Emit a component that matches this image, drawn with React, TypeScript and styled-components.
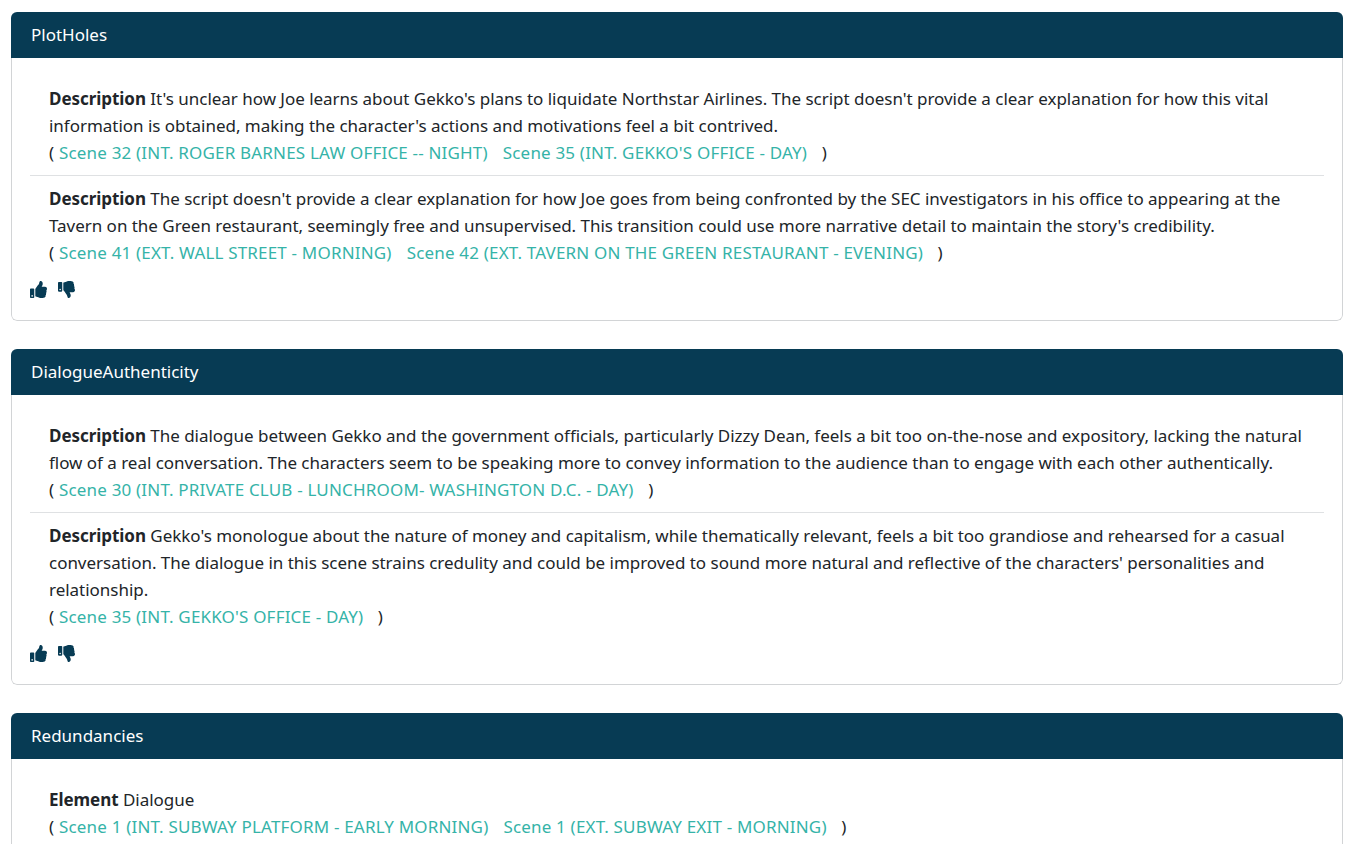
import React from 'react';
import styled, { createGlobalStyle } from 'styled-components';
import { FaThumbsUp, FaThumbsDown } from 'react-icons/fa';

const GlobalStyle = createGlobalStyle`
  html, body {
    margin: 0;
    padding: 0;
    background: #fff;
    height: 844px;
    overflow: hidden;
  }
  body {
    font-family: "Noto Sans", "Open Sans", sans-serif;
    font-size: 17px;
    color: #212529;
  }
`;

const Page = styled.div`
  display: flex;
  flex-direction: column;
  gap: 28px;
  padding: 12px 16px 0 11px;
`;

const Card = styled.section`
  border-radius: 6px;
  overflow: hidden;
  background: #fff;
`;

const CardHeader = styled.header`
  background: #073b54;
  color: #fff;
  height: 46px;
  line-height: 45px;
  padding: 0 20px;
  font-size: 17px;
`;

const CardBody = styled.div`
  border: 1px solid #d2d4d6;
  border-top: none;
  border-radius: 0 0 6px 6px;
  padding: 18px 18px 18px;
`;

const Item = styled.div<{ $divided?: boolean }>`
  padding: 9px 0 9px 19px;
  line-height: 27px;
  letter-spacing: -0.026px;
  border-top: ${props => (props.$divided ? '1px solid #dfe1e3' : 'none')};
`;

const Label = styled.strong`
  font-weight: 700;
  letter-spacing: -0.05px;
`;

const SceneLink = styled.a`
  color: #35b3a8;
  text-decoration: none;
  letter-spacing: 0.18px;
  margin: 0 14.5px 0 0.5px;
`;

const Votes = styled.div`
  display: flex;
  gap: 11px;
  color: #073b54;
  font-size: 17px;
  height: 25px;
  padding-top: 2px;
  align-items: center;
`;

type Entry = { label: string; text?: string; scenes: string[] };

const sections: { title: string; entries: Entry[]; votes: boolean }[] = [
  {
    title: 'PlotHoles',
    votes: true,
    entries: [
      {
        label: 'Description',
        text: "It's unclear how Joe learns about Gekko's plans to liquidate Northstar Airlines. The script doesn't provide a clear explanation for how this vital information is obtained, making the character's actions and motivations feel a bit contrived.",
        scenes: ['Scene 32 (INT. ROGER BARNES LAW OFFICE -- NIGHT)', "Scene 35 (INT. GEKKO'S OFFICE - DAY)"],
      },
      {
        label: 'Description',
        text: "The script doesn't provide a clear explanation for how Joe goes from being confronted by the SEC investigators in his office to appearing at the Tavern on the Green restaurant, seemingly free and unsupervised. This transition could use more narrative detail to maintain the story's credibility.",
        scenes: ['Scene 41 (EXT. WALL STREET - MORNING)', 'Scene 42 (EXT. TAVERN ON THE GREEN RESTAURANT - EVENING)'],
      },
    ],
  },
  {
    title: 'DialogueAuthenticity',
    votes: true,
    entries: [
      {
        label: 'Description',
        text: 'The dialogue between Gekko and the government officials, particularly Dizzy Dean, feels a bit too on-the-nose and expository, lacking the natural flow of a real conversation. The characters seem to be speaking more to convey information to the audience than to engage with each other authentically.',
        scenes: ['Scene 30 (INT. PRIVATE CLUB - LUNCHROOM- WASHINGTON D.C. - DAY)'],
      },
      {
        label: 'Description',
        text: "Gekko's monologue about the nature of money and capitalism, while thematically relevant, feels a bit too grandiose and rehearsed for a casual conversation. The dialogue in this scene strains credulity and could be improved to sound more natural and reflective of the characters' personalities and relationship.",
        scenes: ["Scene 35 (INT. GEKKO'S OFFICE - DAY)"],
      },
    ],
  },
  {
    title: 'Redundancies',
    votes: false,
    entries: [
      {
        label: 'Element',
        text: 'Dialogue',
        scenes: ['Scene 1 (INT. SUBWAY PLATFORM - EARLY MORNING)', 'Scene 1 (EXT. SUBWAY EXIT - MORNING)'],
      },
    ],
  },
];

export default function App() {
  return (
    <>
      <GlobalStyle />
      <Page>
        {sections.map(section => (
          <Card key={section.title}>
            <CardHeader>{section.title}</CardHeader>
            <CardBody>
              {section.entries.map((entry, i) => (
                <Item key={i} $divided={i > 0}>
                  <Label>{entry.label}</Label> {entry.text}
                  <br />
                  ({' '}
                  {entry.scenes.map(scene => (
                    <SceneLink key={scene} href="#">{scene}</SceneLink>
                  ))}
                  )
                </Item>
              ))}
              {section.votes && (
                <Votes>
                  <FaThumbsUp />
                  <FaThumbsDown />
                </Votes>
              )}
            </CardBody>
          </Card>
        ))}
      </Page>
    </>
  );
}
